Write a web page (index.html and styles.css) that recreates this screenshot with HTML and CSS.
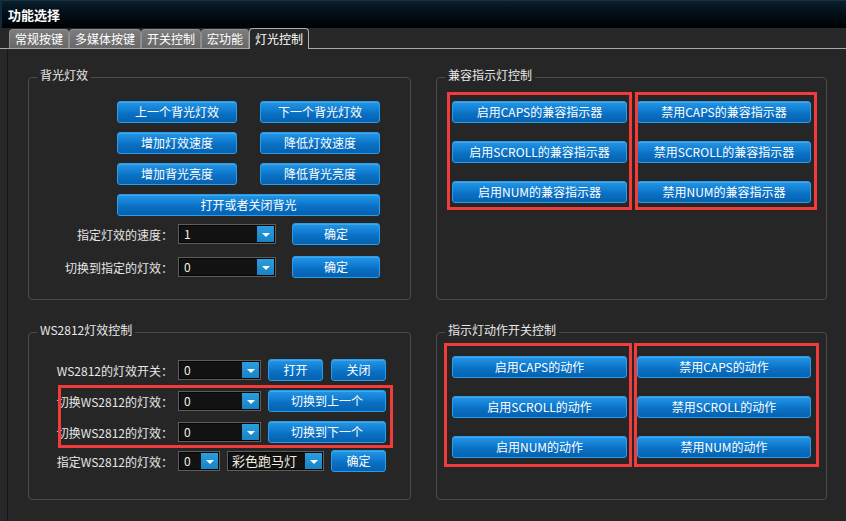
FILE: index.html
```html
<!DOCTYPE html>
<html lang="zh-CN">
<head>
<meta charset="utf-8">
<title>功能选择</title>
<link rel="stylesheet" href="styles.css">
</head>
<body>
<div class="window">
  <div class="titlebar">功能选择</div>
  <div class="tabbar">
    <div class="tab">常规按键</div>
    <div class="tab">多媒体按键</div>
    <div class="tab">开关控制</div>
    <div class="tab">宏功能</div>
    <div class="tab active">灯光控制</div>
  </div>
  <div class="panel">
    <div class="groups">
      <section class="group g1">
        <span class="group-title">背光灯效</span>
        <div class="bl-grid">
          <button class="btn">上一个背光灯效</button>
          <button class="btn">下一个背光灯效</button>
          <button class="btn">增加灯效速度</button>
          <button class="btn">降低灯效速度</button>
          <button class="btn">增加背光亮度</button>
          <button class="btn">降低背光亮度</button>
          <button class="btn wide">打开或者关闭背光</button>
        </div>
        <div class="form-row r1">
          <span class="label">指定灯效的速度：</span>
          <div class="combo w98"><span class="combo-val">1</span><span class="combo-arrow"></span></div>
          <button class="btn ok">确定</button>
        </div>
        <div class="form-row r2">
          <span class="label">切换到指定的灯效：</span>
          <div class="combo w98"><span class="combo-val">0</span><span class="combo-arrow"></span></div>
          <button class="btn ok">确定</button>
        </div>
      </section>

      <section class="group g2">
        <span class="group-title">兼容指示灯控制</span>
        <div class="btn-grid">
          <button class="btn">启用CAPS的兼容指示器</button>
          <button class="btn">禁用CAPS的兼容指示器</button>
          <button class="btn">启用SCROLL的兼容指示器</button>
          <button class="btn">禁用SCROLL的兼容指示器</button>
          <button class="btn">启用NUM的兼容指示器</button>
          <button class="btn">禁用NUM的兼容指示器</button>
        </div>
        <div class="mark g2-m1"></div>
        <div class="mark g2-m2"></div>
      </section>

      <section class="group g3">
        <span class="group-title">WS2812灯效控制</span>
        <div class="form-row">
          <span class="label">WS2812的灯效开关：</span>
          <div class="combo w83"><span class="combo-val">0</span><span class="combo-arrow"></span></div>
          <button class="btn sm">打开</button>
          <button class="btn sm">关闭</button>
        </div>
        <div class="form-row s9">
          <span class="label">切换WS2812的灯效：</span>
          <div class="combo w83"><span class="combo-val">0</span><span class="combo-arrow"></span></div>
          <button class="btn lg">切换到上一个</button>
        </div>
        <div class="form-row s9">
          <span class="label">切换WS2812的灯效：</span>
          <div class="combo w83"><span class="combo-val">0</span><span class="combo-arrow"></span></div>
          <button class="btn lg">切换到下一个</button>
        </div>
        <div class="form-row s7">
          <span class="label">指定WS2812的灯效：</span>
          <div class="combo w42"><span class="combo-val">0</span><span class="combo-arrow"></span></div>
          <div class="combo w97 combo-gap"><span class="combo-val big">彩色跑马灯</span><span class="combo-arrow"></span></div>
          <button class="btn sm">确定</button>
        </div>
        <div class="mark g3-m1"></div>
      </section>

      <section class="group g4">
        <span class="group-title">指示灯动作开关控制</span>
        <div class="btn-grid">
          <button class="btn">启用CAPS的动作</button>
          <button class="btn">禁用CAPS的动作</button>
          <button class="btn">启用SCROLL的动作</button>
          <button class="btn">禁用SCROLL的动作</button>
          <button class="btn">启用NUM的动作</button>
          <button class="btn">禁用NUM的动作</button>
        </div>
        <div class="mark g4-m1"></div>
        <div class="mark g4-m2"></div>
      </section>
    </div>
  </div>
</div>
</body>
</html>
```

FILE: styles.css
```css
* { box-sizing: border-box; }

html, body {
  margin: 0;
  padding: 0;
}

body {
  width: 846px;
  height: 521px;
  overflow: hidden;
  background: #282828;
  font-family: "Noto Sans CJK SC", "Noto Sans", sans-serif;
  font-size: 12px;
  color: #ececec;
}

.window {
  height: 521px;
  display: flex;
  flex-direction: column;
}

.titlebar {
  height: 28px;
  line-height: 27px;
  padding-left: 6px;
  font-size: 13px;
  font-weight: bold;
  color: #ffffff;
  background: linear-gradient(to bottom, #0b1f2c 0%, #04121b 35%, #01070b 80%, #000000 100%);
  border-top: 1px solid #143446;
  border-left: 2px solid #0f2c3e;
}

.tabbar {
  display: flex;
  align-items: flex-end;
  height: 21px;
  padding-left: 9px;
  border-bottom: 1px solid #a9a9a9;
}

.tab {
  height: 19px;
  line-height: 17px;
  padding: 0 5px;
  color: #ffffff;
  background: linear-gradient(to bottom, #7c7c7c, #686868);
  border: 1px solid #8e8e8e;
  border-bottom: none;
  border-radius: 4px 4px 0 0;
  white-space: nowrap;
}

.tab.active {
  height: 21px;
  line-height: 19px;
  margin-bottom: -1px;
  background: #272727;
  border-color: #b0b0b0;
}

.panel {
  flex: 1;
  margin-left: 7px;
  border-left: 1px solid #0d1822;
  background: #262626;
  padding: 28px 0 0 20px;
}

.groups {
  display: grid;
  grid-template-columns: 383px 391px;
  grid-template-rows: 223px 168px;
  column-gap: 25px;
  row-gap: 32px;
}

.group {
  position: relative;
  border: 1px solid #4b4b4b;
  border-radius: 4px;
}

.group-title {
  position: absolute;
  top: -11px;
  left: 8px;
  padding: 0 3px;
  line-height: 16px;
  background: #262626;
  color: #e8e8e8;
  white-space: nowrap;
}

.btn {
  display: block;
  height: 22px;
  padding: 0;
  margin: 0;
  font-family: inherit;
  font-size: 12px;
  line-height: 20px;
  color: #ffffff;
  text-align: center;
  white-space: nowrap;
  border: 1px solid #2a9cec;
  border-radius: 3px;
  background: linear-gradient(to bottom, #2496e4 0%, #117dd2 40%, #0a6fc2 60%, #0562b0 100%);
  box-shadow: inset 0 1px 0 rgba(120, 200, 255, 0.35);
}

/* group 1 */
.g1 { padding-top: 23px; }

.bl-grid {
  display: grid;
  grid-template-columns: 120px 120px;
  column-gap: 23px;
  row-gap: 9px;
  margin-left: 88px;
}

.bl-grid .wide { grid-column: 1 / span 2; }

.form-row {
  display: flex;
  align-items: center;
  height: 22px;
}

.g1 .r1 { margin-top: 7px; }
.g1 .r2 { margin-top: 11px; }

.label {
  flex: 0 0 149px;
  padding-right: 5px;
  text-align: right;
  white-space: nowrap;
  color: #e6e6e6;
}

.combo {
  display: flex;
  height: 20px;
  border: 1px solid #5e5e5e;
  background: #121212;
  box-shadow: inset 0 0 0 1px #050505;
}

.combo-val {
  flex: 1;
  padding-left: 5px;
  line-height: 18px;
  color: #f2efe0;
  overflow: hidden;
  white-space: nowrap;
}

.combo-val.big {
  font-size: 13px;
  padding-left: 4px;
}

.combo-arrow {
  flex: 0 0 17px;
  margin: 1px 1px 1px 0;
  display: flex;
  align-items: center;
  justify-content: center;
  background: linear-gradient(to bottom, #2a9ede, #1784c6);
}

.combo-arrow::after {
  content: "";
  width: 0;
  height: 0;
  border-left: 4px solid transparent;
  border-right: 4px solid transparent;
  border-top: 4px solid #ffffff;
  margin-top: 2px;
}

.w98 { width: 98px; }
.w83 { width: 83px; }
.w42 { width: 42px; }
.w97 { width: 97px; }

.ok { width: 88px; margin-left: 16px; }

/* group 3 */
.g3 { padding-top: 26px; }
.g3 .s9 { margin-top: 9px; }
.g3 .s7 { margin-top: 7px; }

.g3 .btn.sm { width: 55px; margin-left: 8px; }
.g3 .combo + .btn { margin-left: 7px; }
.g3 .btn.lg { width: 118px; }
.combo-gap { margin-left: 7px; }

/* groups 2 and 4 */
.g2, .g4 { padding-top: 23px; }

.btn-grid {
  display: grid;
  grid-template-columns: 175px 174px;
  column-gap: 10px;
  row-gap: 18px;
  margin-left: 15px;
}

/* annotation boxes */
.mark {
  position: absolute;
  border: 3px solid #f23b3b;
  pointer-events: none;
}

.g2-m1 { left: 10px; top: 14px; width: 185px; height: 118px; }
.g2-m2 { left: 198px; top: 14px; width: 182px; height: 118px; }
.g3-m1 { left: 29px; top: 52px; width: 335px; height: 63px; }
.g4-m1 { left: 7px; top: 10px; width: 188px; height: 124px; }
.g4-m2 { left: 197px; top: 10px; width: 185px; height: 124px; }
```
